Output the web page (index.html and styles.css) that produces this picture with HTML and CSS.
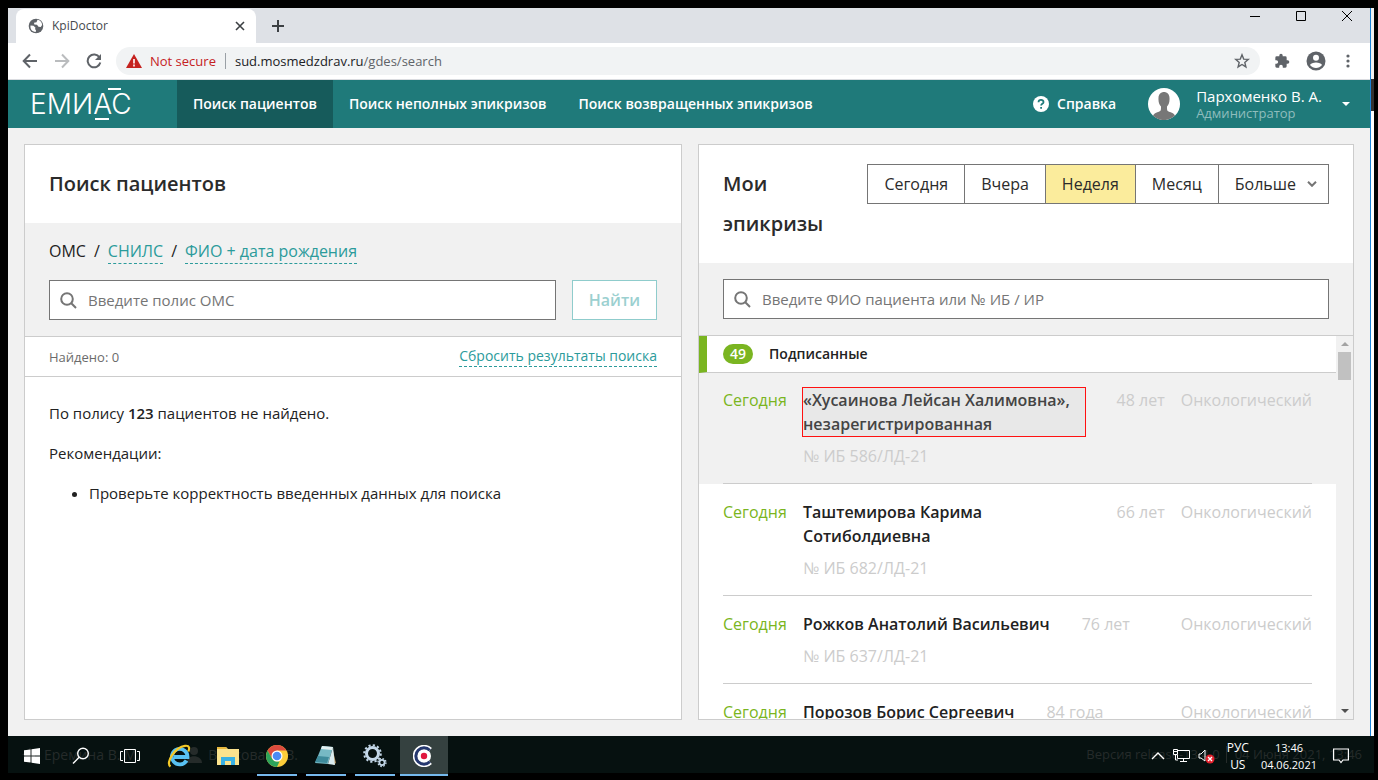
FILE: index.html
```html
<!DOCTYPE html>
<html lang="ru">
<head>
<meta charset="utf-8">
<title>KpiDoctor</title>
<link rel="stylesheet" href="styles.css">
</head>
<body>
<div class="screen">
  <div class="browser">
    <div class="tabstrip">
      <div class="tab">
        <svg class="tab-icon" width="16" height="16" viewBox="0 0 16 16"><circle cx="8" cy="8" r="7.300" fill="#5f6368"/><path d="M2.500 7.500l3 .2 2 2-.5 1.300 1 1.200-.3 1.800C4 13.500 2 11 2.500 7.500zM9.500 1.800l-1 2.400-2.500.6.300 1.700 2.700.2 1.500 2 2.300.3 1.300-2c0-3-2-4.700-4.600-5.200z" fill="#fff"/></svg>
        <span class="tab-title">KpiDoctor</span>
        <button class="plain" aria-label="Close tab"><svg width="10" height="10" viewBox="0 0 10 10" stroke="#3c4043" stroke-width="1.600"><path d="M1 1l8 8M9 1L1 9"/></svg></button>
      </div>
      <button class="plain new-tab" aria-label="New tab"><svg width="12" height="12" viewBox="0 0 12 12" stroke="#3c4043" stroke-width="2"><path d="M6 0v12M0 6h12"/></svg></button>
      <div class="window-buttons">
        <button class="plain" aria-label="Minimize"><svg width="12" height="12" viewBox="0 0 12 12" stroke="#000"><path d="M1 6.500h10"/></svg></button>
        <button class="plain" aria-label="Maximize"><svg width="12" height="12" viewBox="0 0 12 12" stroke="#000" fill="none"><path d="M1.500 1.500h9v9h-9z"/></svg></button>
        <button class="plain" aria-label="Close"><svg width="12" height="12" viewBox="0 0 12 12" stroke="#000"><path d="M1 1l10 10M11 1L1 11"/></svg></button>
      </div>
    </div>
    <div class="toolbar">
      <button class="plain" aria-label="Back"><svg width="16" height="16" viewBox="0 0 16 16" fill="none" stroke="#5f6368" stroke-width="2"><path d="M15 8H2M8 1.500L1.700 8 8 14.500"/></svg></button>
      <button class="plain" aria-label="Forward"><svg width="16" height="16" viewBox="0 0 16 16" fill="none" stroke="#babcbe" stroke-width="2"><path d="M1 8h13M8 1.500L14.300 8 8 14.500"/></svg></button>
      <button class="plain" aria-label="Reload"><svg width="16" height="16" viewBox="0 0 16 16" fill="none" stroke="#5f6368" stroke-width="2"><path d="M13.500 4.500A6.400 6.400 0 1 0 14.300 9.500"/><path d="M15 1v6H9z" fill="#5f6368" stroke="none"/></svg></button>
      <div class="address">
        <svg width="16" height="14" viewBox="0 0 16 14"><path d="M8 0l8 14H0z" fill="#c5221f"/><path d="M8 5v4.500M8 10.500v2" stroke="#fff" stroke-width="1.600"/></svg>
        <span class="not-secure">Not secure</span>
        <span class="address-divider"></span>
        <span class="url">sud.mosmedzdrav.ru<span class="url-path">/gdes/search</span></span>
        <svg class="star" width="16" height="16" viewBox="0 0 16 16" fill="none" stroke="#5f6368" stroke-width="1.400"><path d="M8 1.800l1.700 4.300 4.600.3-3.500 3 1.100 4.500L8 11.500l-3.900 2.400 1.100-4.500-3.500-3 4.600-.3z"/></svg>
      </div>
      <svg width="16" height="16" viewBox="0 0 24 24" fill="#5f6368"><path d="M20.500 11H19V7a2 2 0 0 0-2-2h-4V3.500a2.500 2.500 0 0 0-5 0V5H4a2 2 0 0 0-2 2v3.800h1.500a2.700 2.700 0 0 1 0 5.400H2V20a2 2 0 0 0 2 2h3.800v-1.500a2.700 2.700 0 0 1 5.400 0V22H17a2 2 0 0 0 2-2v-4h1.500a2.500 2.500 0 0 0 0-5z"/></svg>
      <svg width="20" height="20" viewBox="0 0 20 20"><circle cx="10" cy="10" r="9.500" fill="#5f6368"/><circle cx="10" cy="6.800" r="3" fill="#fff"/><path d="M4 14c1-3.500 11-3.500 12 0-3 4-9 4-12 0z" fill="#fff"/></svg>
      <svg class="dots" width="4" height="14" viewBox="0 0 4 14" fill="#5f6368"><circle cx="2" cy="2" r="1.600"/><circle cx="2" cy="7" r="1.600"/><circle cx="2" cy="12" r="1.600"/></svg>
    </div>

    <header class="app-header">
      <svg class="logo" width="113" height="34" viewBox="0 0 113 34" role="img" aria-label="ЕМИАС"><text class="logo-text" x="-1" y="27">ЕМИАС</text><path d="M77 2h13M64 32h14" stroke="#fff" stroke-width="2"/></svg>
      <nav class="nav">
        <a class="nav-link nav-link--active" href="#">Поиск пациентов</a>
        <a class="nav-link" href="#">Поиск неполных эпикризов</a>
        <a class="nav-link" href="#">Поиск возвращенных эпикризов</a>
      </nav>
      <a class="help" href="#"><svg width="16" height="16" viewBox="0 0 16 16"><circle cx="8" cy="8" r="8" fill="#fff"/><path d="M5.500 6.200c.2-3.200 5.200-2.900 5 0 0 1.600-2.400 1.700-2.400 3.300M8.100 11v1.800" fill="none" stroke="#1f7a7a" stroke-width="1.800"/></svg>Справка</a>
      <button class="plain user">
        <svg width="32" height="32" viewBox="0 0 32 32"><circle cx="16" cy="16" r="16" fill="#fff"/><path d="M10.500 10c0-8 11-8 11 0 .3 4-1 7-2.500 8.500 0 4 0 4.500 3 5.500 3 .9 4 2 5 3.600-6.500 6-16 6-22 0 1-1.600 2-2.700 5-3.600 3-1 3-1.500 3-5.500-1.500-1.500-2.800-4.500-2.500-8.500z" fill="#777"/></svg>
        <span class="user-text"><span class="user-name">Пархоменко В. А.</span><span class="user-role">Администратор</span></span>
        <svg width="8" height="4" viewBox="0 0 8 4"><path d="M0 0h8L4 4z" fill="#fff"/></svg>
      </button>
    </header>

    <main class="content">
      <section class="panel">
        <div class="panel-head"><h1 class="title">Поиск пациентов</h1></div>
        <div class="search-area">
          <div class="modes"><span>ОМС</span><span>/</span><a class="dashed" href="#">СНИЛС</a><span>/</span><a class="dashed" href="#">ФИО + дата рождения</a></div>
          <form class="search-form">
            <label class="field"><svg width="17" height="17" viewBox="0 0 17 17" fill="none" stroke="#757575" stroke-width="2"><circle cx="7" cy="7" r="5.800"/><path d="M11.300 11.300L16 16"/></svg><input type="text" aria-label="Полис ОМС" placeholder="Введите полис ОМС"></label>
            <button class="find" type="button">Найти</button>
          </form>
        </div>
        <div class="found"><span>Найдено: 0</span><a class="dashed" href="#">Сбросить результаты поиска</a></div>
        <div class="result">
          <p>По полису <b>123</b> пациентов не найдено.</p>
          <p>Рекомендации:</p>
          <ul><li>Проверьте корректность введенных данных для поиска</li></ul>
        </div>
      </section>

      <section class="panel">
        <div class="panel-head">
          <h2 class="title">Мои эпикризы</h2>
          <div class="periods">
            <button class="period">Сегодня</button>
            <button class="period">Вчера</button>
            <button class="period period--active">Неделя</button>
            <button class="period">Месяц</button>
            <button class="period">Больше <svg width="10" height="6" viewBox="0 0 10 6" fill="none" stroke="#757575" stroke-width="2"><path d="M1 .8l4 4 4-4"/></svg></button>
          </div>
        </div>
        <div class="search-area">
          <label class="field"><svg width="17" height="17" viewBox="0 0 17 17" fill="none" stroke="#757575" stroke-width="2"><circle cx="7" cy="7" r="5.800"/><path d="M11.300 11.300L16 16"/></svg><input type="text" aria-label="Поиск эпикризов" placeholder="Введите ФИО пациента или № ИБ / ИР"></label>
        </div>
        <div class="list-wrap">
          <div class="list">
            <div class="group"><span class="badge">49</span><span>Подписанные</span></div>
            <article class="row row--selected"><div class="row-in">
              <span class="date">Сегодня</span>
              <div class="who"><div class="name name--marked">«Хусаинова Лейсан Халимовна», незарегистрированная</div><div class="num">№ ИБ 586/ЛД-21</div></div>
              <span class="age">48 лет</span><span class="dept">Онкологический</span>
            </div></article>
            <article class="row"><div class="row-in">
              <span class="date">Сегодня</span>
              <div class="who"><div class="name">Таштемирова Карима Сотиболдиевна</div><div class="num">№ ИБ 682/ЛД-21</div></div>
              <span class="age">66 лет</span><span class="dept">Онкологический</span>
            </div></article>
            <article class="row"><div class="row-in">
              <span class="date">Сегодня</span>
              <div class="who"><div class="name">Рожков Анатолий Васильевич</div><div class="num">№ ИБ 637/ЛД-21</div></div>
              <span class="age">76 лет</span><span class="dept">Онкологический</span>
            </div></article>
            <article class="row"><div class="row-in">
              <span class="date">Сегодня</span>
              <div class="who"><div class="name">Порозов Борис Сергеевич</div></div>
              <span class="age">84 года</span><span class="dept">Онкологический</span>
            </div></article>
          </div>
          <div class="scrollbar">
            <svg width="8" height="4" viewBox="0 0 8 4"><path d="M0 4h8L4 0z" fill="#a3a3a3"/></svg>
            <div class="thumb"></div>
            <svg class="scroll-down" width="8" height="4" viewBox="0 0 8 4"><path d="M0 0h8L4 4z" fill="#505050"/></svg>
          </div>
        </div>
      </section>
    </main>
  </div>
  <div class="edge"><div class="edge-top"></div><div class="edge-dark"></div><div class="edge-rest"></div></div>

  <footer class="taskbar">
    <div class="under">
      <svg width="16" height="16" viewBox="0 0 16 16"><path d="M0 8l8-7 8 7h-3v7H3V8z" fill="#252b2a"/></svg>
      <span>Еремина В. М.</span>
      <svg class="under-person" width="16" height="16" viewBox="0 0 16 16" fill="#252b2a"><circle cx="8" cy="4" r="4"/><path d="M0 16c0-9 16-9 16 0z"/></svg>
      <span>Волкова В. В.</span>
      <span class="under-version">Версия release-13.4.0</span>
      <span class="under-date">04 Июня 2021, 13:46</span>
    </div>
    <button class="plain task" aria-label="Пуск"><svg width="16" height="16" viewBox="0 0 16 16" fill="#fff"><path d="M0 2.300L6.500 1.400v6.100H0zM7.500 1.200L16 0v7.500H7.500zM0 8.500h6.500v6.100L0 13.700zM7.500 8.500H16V16l-8.500-1.200z"/></svg></button>
    <button class="plain task" aria-label="Поиск"><svg width="18" height="18" viewBox="0 0 18 18" fill="none" stroke="#fff" stroke-width="1.400"><circle cx="11" cy="6.500" r="5.300"/><path d="M7.200 10.300L1 16.500"/></svg></button>
    <button class="plain task" aria-label="Представление задач"><svg width="20" height="14" viewBox="0 0 20 14" fill="none" stroke="#fff"><path d="M4.500.5h11v13h-11zM3 2.500H.5v9H3M17 2.500h2.500v9H17"/></svg></button>
    <button class="plain task" aria-label="Internet Explorer"><svg width="24" height="24" viewBox="0 0 24 24"><path d="M19.500 16.500a7.800 7.800 0 1 1 1-3.500H7" fill="none" stroke="#58c1f2" stroke-width="3.800"/><path d="M3.500 22.500C-2 19 8 3 18 1.800c5-.6 4.500 3 3.300 5.700" fill="none" stroke="#f5ca27" stroke-width="2.200"/></svg></button>
    <button class="plain task" aria-label="Проводник"><svg width="22" height="20" viewBox="0 0 22 20"><path d="M0 1h9l2 2h11v16H0z" fill="#fbe38e"/><path d="M0 1h9l1 2H0z" fill="#e8b83d"/><path d="M4 19v-8h14v8h-4v-4H8v4z" fill="#39b1e4"/></svg></button>
    <button class="plain task task--open" aria-label="Google Chrome"><svg width="22" height="22" viewBox="0 0 22 22"><circle cx="11" cy="11" r="11" fill="#fbcd3a"/><path d="M1.500 5.500A11 11 0 0 1 20.500 5.500H11L6.200 13.800z" fill="#dc4b3e"/><path d="M1.500 5.500l4.700 8.300A5.500 5.500 0 0 0 11 16.500h2.500L11 22A11 11 0 0 1 1.500 5.500z" fill="#2da45b"/><circle cx="11" cy="11" r="5.500" fill="#fff"/><circle cx="11" cy="11" r="4.300" fill="#4a8af4"/></svg></button>
    <button class="plain task task--open" aria-label="Блокнот"><svg width="24" height="22" viewBox="0 0 24 22"><path d="M18 2l4 16-3 2z" fill="#b08b52"/><path d="M8 1l11 1-5 17L1 18z" fill="#76b9c4"/><path d="M8 1l11 1-1 3L7 4z" fill="#e2eff0"/><path d="M19 2l2 18-7-1z" fill="#d8ebee"/><path d="M4 11l11 1-2 6-12-1z" fill="#3e8b9b"/></svg></button>
    <button class="plain task task--open" aria-label="Службы"><svg width="24" height="24" viewBox="0 0 24 24" fill="none" stroke="#c3d7e8"><circle cx="9.500" cy="9.500" r="6" stroke-width="3"/><circle cx="9.500" cy="9.500" r="8.300" stroke-width="2" stroke-dasharray="2.200 2.146"/><circle cx="19" cy="18.500" r="2.600" stroke-width="1.800"/><circle cx="19" cy="18.500" r="4" stroke-width="1.300" stroke-dasharray="1.600 1.541"/></svg></button>
    <button class="plain task task--open task--active" aria-label="Citrix"><svg width="22" height="22" viewBox="0 0 22 22" fill="none"><path d="M17.500 4.500A9.200 9.200 0 1 0 17.500 17.500" stroke="#fff" stroke-width="4"/><circle cx="11" cy="11" r="7" fill="#fff"/><path d="M16.800 5.200A8.200 8.200 0 1 0 16.800 16.800" stroke="#26386f" stroke-width="3"/><circle cx="11" cy="11" r="3.200" fill="#e0173f"/></svg></button>
    <div class="tray">
      <div class="tray-icons">
        <svg width="14" height="8" viewBox="0 0 14 8" fill="none" stroke="#fff" stroke-width="1.400"><path d="M1 7l6-6 6 6"/></svg>
        <svg width="17" height="14" viewBox="0 0 17 14" fill="none" stroke="#fff"><path d="M5 1.500h11.500v8H4.500V6M7 12.500h7M10.500 9.500v3M2.500 6v5H5M.5.500h4v5h-4zM1 2.500h3"/></svg>
        <svg width="17" height="15" viewBox="0 0 17 15"><path d="M1 5h2l4-4v11L3 9H1z" fill="none" stroke="#fff"/><circle cx="12" cy="10" r="4.500" fill="#e2212d"/><path d="M10 8l4 4M14 8l-4 4" stroke="#fff" stroke-width="1.300"/></svg>
      </div>
      <span class="tray-text">РУС<br>US</span>
      <span class="tray-text tray-clock">13:46<br>04.06.2021</span>
      <svg class="notice" width="16" height="16" viewBox="0 0 16 16" fill="none" stroke="#fff" stroke-width="1.200"><path d="M.6 1h14.800v11H10l-2 2.500L6 12H.6z"/></svg>
    </div>
  </footer>
</div>
</body>
</html>
```
FILE: styles.css
```css
* { box-sizing: border-box; }
body { margin: 0; background: #000; color: #222; font: 16px/24px "Open Sans", "Noto Sans", sans-serif; }
a { color: inherit; text-decoration: none; }
svg { display: block; flex: none; }
.plain { display: flex; align-items: center; justify-content: center; flex: none; padding: 0; border: 0; background: none; color: inherit; font: inherit; }

.screen { display: grid; grid-template-columns: minmax(0, 1fr) 4px; grid-template-rows: minmax(0, 1fr) 40px; height: 100vh; padding: 8px 4px 4px 8px; }
.browser { display: flex; flex-direction: column; min-height: 0; background: #f1f1f1; }
.edge { display: flex; flex-direction: column; border-left: 1px solid #1a82d8; background: #fff; }
.edge-top { height: 71px; background: #f1f1f1; }
.edge-dark { height: 32px; background: #333; }
.edge-rest { flex: 1; }

.tabstrip { display: flex; flex: none; height: 35px; padding-left: 8px; background: #dee1e6; }
.tab { display: flex; align-items: center; width: 240px; margin-top: 1px; padding: 0 11px 0 12px; border-radius: 8px 8px 0 0; background: #fff; }
.tab-title { flex: 1; margin-left: 8px; color: #45494d; font-size: 12px; }
.new-tab { width: 44px; }
.window-buttons { display: flex; gap: 34px; height: 16px; margin-left: auto; padding-right: 17px; }
.toolbar { display: flex; align-items: center; flex: none; gap: 16px; height: 37px; padding: 0 20px 0 14px; border-bottom: 1px solid #dadce0; background: #fff; }
.address { display: flex; align-items: center; flex: 1; height: 28px; margin: 0 -2px; padding: 0 10px; border-radius: 14px; background: #f1f3f4; font-size: 13px; }
.not-secure { margin-left: 8px; color: #c5221f; }
.address-divider { width: 1px; height: 16px; margin: 0 9px; background: #9aa0a6; }
.url { color: #202124; }
.url-path { color: #5f6368; }
.star { margin-left: auto; }
.dots { margin-left: 4px; }

.app-header { display: flex; flex: none; height: 48px; background: #1f7a7a; color: #fff; }
.logo { align-self: center; margin: 0 33px 0 23px; overflow: visible; }
.logo-text { fill: #fff; font: 300 28px Inter, sans-serif; }
.nav { display: flex; }
.nav-link { display: flex; align-items: center; padding: 0 16px; font-size: 14px; font-weight: 600; white-space: nowrap; }
.nav-link--active { background: #165b5b; }
.help { display: flex; align-items: center; gap: 8px; margin-left: auto; font-size: 14px; font-weight: 600; }
.user { gap: 16px; margin: 0 20px 0 32px; }
.user-text { display: flex; flex-direction: column; margin-right: 4px; text-align: left; }
.user-name { font-size: 15px; line-height: 17px; }
.user-role { color: #8fbdbd; font-size: 13px; line-height: 16px; }

.content { display: grid; grid-template-columns: 658fr 656fr; gap: 16px; flex: 1; min-height: 0; padding: 16px; }
.panel { display: flex; flex-direction: column; min-width: 0; min-height: 0; border: 1px solid #ccc; background: #fff; }
.panel-head { display: flex; align-items: flex-start; justify-content: space-between; gap: 16px; flex: none; padding: 19px 24px; }
.title { margin: 0; color: #2b2b2b; font-size: 20px; font-weight: 600; line-height: 40px; }
.search-area { flex: none; padding: 16px 24px; border-bottom: 1px solid #ccc; background: #f1f1f1; }
.modes { display: flex; gap: 8px; margin-bottom: 16px; }
.dashed { border-bottom: 1px dashed #2b9b9b; color: #2b9b9b; }
.search-form { display: flex; gap: 16px; }
.field { display: flex; align-items: center; flex: 1; gap: 11px; min-width: 0; height: 40px; padding: 0 10px; border: 1px solid #757575; background: #fff; }
.field input { flex: 1; min-width: 0; padding: 0; border: 0; outline: 0; background: none; font: inherit; font-size: 15px; }
.field input::placeholder { color: #757575; opacity: 1; }
.find { padding: 0 16px; border: 1px solid #8fcccc; background: #fff; color: #9bd0d0; font: inherit; font-weight: 600; }
.found { display: flex; align-items: center; justify-content: space-between; flex: none; height: 40px; padding: 0 24px; border-bottom: 1px solid #ccc; color: #6b6b6b; font-size: 13px; line-height: 20px; }
.found .dashed { font-size: 14px; }
.result { padding: 24px; font-size: 15px; }
.result p { margin: 0 0 16px; }
.result b { font-weight: 600; }
.result ul { margin: 0; padding-left: 40px; }

.periods { display: flex; flex: none; border: 1px solid #757575; }
.period { display: flex; align-items: center; gap: 11px; height: 38px; padding: 0 16px; border: 0; border-left: 1px solid #757575; background: #fff; color: #2b2b2b; font: inherit; }
.period:first-child { border-left: 0; }
.period:last-child { padding-right: 11px; }
.period--active { background: #fbec9c; }

.list-wrap { display: flex; flex: 1; min-height: 0; }
.list { flex: 1; min-width: 0; overflow: hidden; }
.group { display: flex; align-items: center; gap: 16px; height: 37px; padding-left: 16px; border-bottom: 1px solid #ccc; border-left: 8px solid #7ab521; font-size: 14px; font-weight: 600; }
.badge { padding: 0 7px; border-radius: 10px; background: #7ab521; color: #fff; line-height: 20px; }
.row { padding: 0 24px; }
.row--selected { background: #f1f1f1; }
.row-in { display: flex; padding: 16px 0 15px; border-bottom: 1px solid #ccc; }
.row--selected .row-in { padding-top: 15px; }
.date { flex: none; width: 64px; margin-right: 16px; color: #7ab521; }
.who { display: flex; flex-direction: column; gap: 8px; min-width: 0; }
.name { font-weight: 600; }
.name--marked { outline: 1px solid #f11; background: #e8e8e8; color: #444; }
.num, .age, .dept { color: #ccc; white-space: nowrap; }
.age { margin-left: 32px; }
.dept { margin-left: auto; padding-left: 16px; }
.scrollbar { display: flex; flex: none; flex-direction: column; align-items: center; width: 17px; padding: 6px 0; background: #f1f1f1; }
.thumb { width: 13px; height: 28px; margin-top: 6px; background: #c1c1c1; }
.scroll-down { margin-top: auto; }

.taskbar { position: relative; display: flex; grid-column: 1 / -1; min-width: 0; background: linear-gradient(#061110 37px, #000 37px); color: #fff; font-size: 12px; line-height: 17px; }
.under { position: absolute; inset: 0 12px 3px 14px; display: flex; align-items: center; gap: 6px; color: #252b2a; font-size: 14px; }
.under-person { margin-left: 40px; }
.under-version { margin-left: auto; font-size: 13px; }
.under-date { padding-left: 8px; border-left: 1px solid #252b2a; font-size: 13px; }
.task { position: relative; width: 48px; margin-right: 1px; }
.task--open::after { content: ""; position: absolute; inset: auto 4px 0; height: 2px; background: #76b9ed; }
.task--active { background: #354140; }
.task--active::after { inset: auto 0 0; }
.tray { position: relative; display: flex; align-items: center; gap: 12px; margin-left: auto; padding-right: 25px; }
.tray-icons { display: flex; align-items: center; gap: 8px; }
.tray-text { text-align: center; }
.tray-clock { font-size: 11px; }
.notice { margin-left: 4px; }
```
